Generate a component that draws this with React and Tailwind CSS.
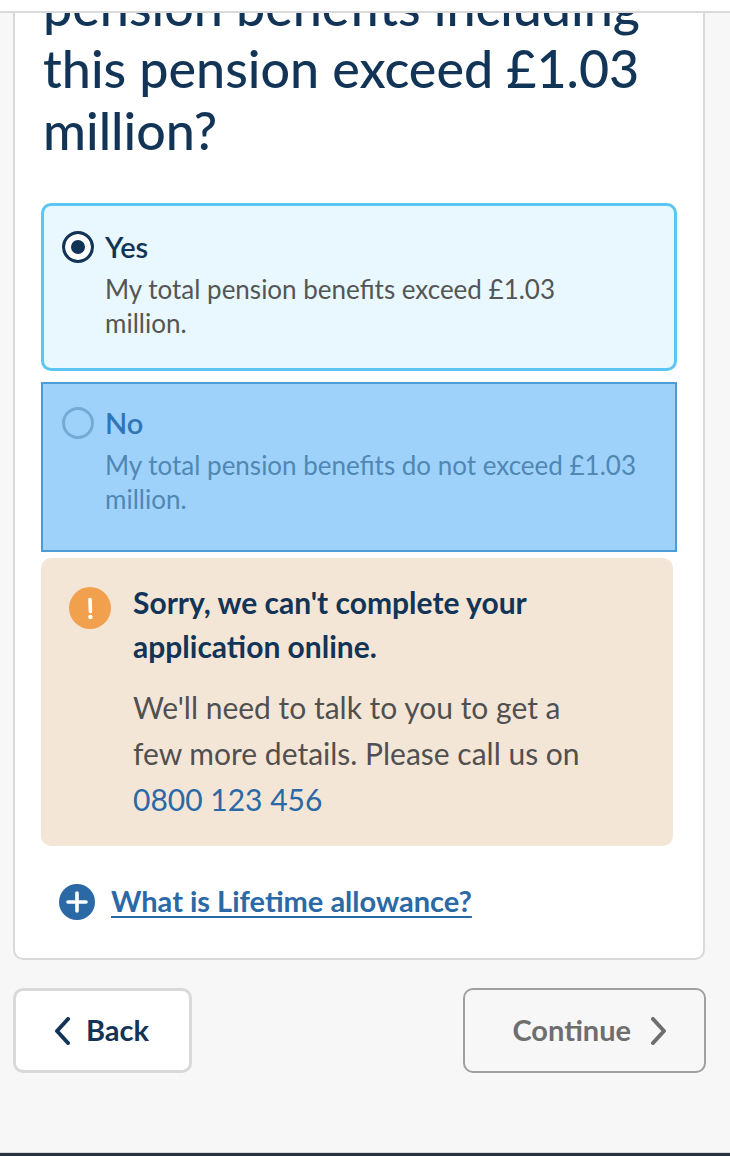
import { useState } from "react";

const options = [
  { id: "yes", label: "Yes", hint: "My total pension benefits exceed £1.03 million." },
  { id: "no", label: "No", hint: "My total pension benefits do not exceed £1.03 million." },
];

function Option({ option, checked, onSelect }) {
  const box = checked
    ? "rounded-[10px] border-3 border-[#5bc6f3] bg-[#e8f8fe] px-[18px] pt-6 pb-7"
    : "border-2 border-[#4c9cd5] bg-[#9fd2fb] px-[19px] pt-[22px] pb-[34px]";
  const radio = checked
    ? "border-3 border-[#123456] bg-[#123456] shadow-[inset_0_0_0_6px_#ffffff]"
    : "border-3 border-[#75aad4] bg-transparent";
  return (
    <label className={`flex items-start gap-[11px] ${box}`}>
      <input
        type="radio"
        name="exceeds-allowance"
        value={option.id}
        checked={checked}
        onChange={() => onSelect(option.id)}
        className={`mt-px size-8 shrink-0 appearance-none rounded-full ${radio}`}
      />
      <span className="flex max-w-[535px] flex-col gap-2">
        <span className={`text-[29px] leading-[34px] font-semibold ${checked ? "text-[#123456]" : "text-[#2f76b3]"}`}>
          {option.label}
        </span>
        <span className={`text-[26px] leading-[34px] ${checked ? "text-[#555555]" : "text-[#5087b3]"}`}>
          {option.hint}
        </span>
      </span>
    </label>
  );
}

function Chevron({ points }) {
  return (
    <svg viewBox="0 0 18 28" className="h-7 w-[18px]" fill="none" stroke="currentColor" strokeWidth="4" strokeLinecap="round" strokeLinejoin="round" aria-hidden="true">
      <polyline points={points} />
    </svg>
  );
}

export default function App() {
  const [answer, setAnswer] = useState("yes");
  return (
    <div className="flex min-h-screen flex-col bg-[#f7f7f7] font-['Lato',sans-serif] text-[#505050]">
      <header className="relative h-[13px] border-b-2 border-[#dadada] bg-white" />
      <main className="flex grow flex-col overflow-hidden pr-[25px] pl-[13px]">
        <section className="-mt-[38px] flex flex-col rounded-[10px] border-2 border-t-0 border-[#d9d9d9] bg-white px-[26px] pb-[38px]">
          <h1 className="px-0.5 text-[52px] leading-[62px] font-medium text-[#123456]">
            pension benefits including this pension exceed £1.03 million?
          </h1>
          <div className="mt-[42px] flex flex-col gap-[11px]">
            {options.map((option) => (
              <Option key={option.id} option={option} checked={answer === option.id} onSelect={setAnswer} />
            ))}
          </div>
          <div role="alert" className="mt-1.5 mr-1 flex items-start gap-[22px] rounded-[10px] bg-[#f4e6d7] px-7 pt-[22px] pb-6">
            <svg viewBox="0 0 42 42" className="mt-[7px] size-[42px] shrink-0" aria-hidden="true">
              <circle cx="21" cy="21" r="21" fill="#f1a04e" />
              <path d="M21 12.5l.4 12" stroke="#fff" strokeWidth="3.6" strokeLinecap="round" />
              <circle cx="21.4" cy="30" r="2.2" fill="#fff" />
            </svg>
            <div className="flex max-w-[450px] flex-col gap-4">
              <h2 className="text-[30px] leading-[44px] font-bold text-[#123456]">
                Sorry, we can't complete your application online.
              </h2>
              <p className="text-[30px] leading-[46px]">
                We'll need to talk to you to get a few more details. Please call us on{" "}
                <a href="tel:0800123456" className="text-[#2b68a6]">0800 123 456</a>
              </p>
            </div>
          </div>
          <div className="mt-[38px] flex items-center gap-4 px-[18px]">
            <svg viewBox="0 0 36 36" className="size-9" aria-hidden="true">
              <circle cx="18" cy="18" r="18" fill="#2b68a6" />
              <path d="M18 9v18M9 18h18" stroke="#fff" strokeWidth="3.6" strokeLinecap="round" />
            </svg>
            <a href="#lifetime-allowance" className="pb-0.5 text-[29px] leading-[34px] font-bold text-[#2b68a6] underline decoration-2 underline-offset-4 [text-decoration-skip-ink:none]">
              What is Lifetime allowance?
            </a>
          </div>
        </section>
        <nav className="-mr-px mt-7 flex items-center justify-between text-[29px] leading-[34px] font-bold">
          <button type="button" className="flex h-[85px] items-center gap-[15px] rounded-[10px] border-3 border-[#d9d9d9] bg-white pr-10 pl-[37px] text-[#123456]">
            <Chevron points="15,2 4,14 15,26" />
            <span className="pb-0.5">Back</span>
          </button>
          <button type="button" className="flex h-[85px] items-center gap-[19px] rounded-[10px] border-2 border-[#a0a0a0] pr-9 pl-[47px] text-[#6e6e6e]">
            <span className="pb-0.5">Continue</span>
            <Chevron points="3,2 14,14 3,26" />
          </button>
        </nav>
      </main>
      <footer className="h-1 border-t border-[#d9d9d9] bg-[#26323f]" />
    </div>
  );
}
